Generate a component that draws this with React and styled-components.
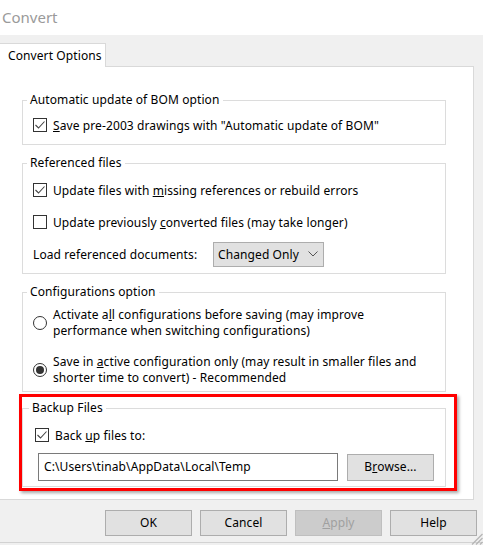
import React from 'react';
import styled, { createGlobalStyle } from 'styled-components';

const Global = createGlobalStyle`
  html, body { margin: 0; padding: 0; background: #f0f0f0; }
  body {
    font-family: "Noto Sans", "Open Sans", sans-serif;
    font-size: 12px;
    letter-spacing: 0.1px;
    color: #000;
    overflow: hidden;
  }
  * { box-sizing: border-box; }
`;

const Window = styled.div`
  position: relative;
  width: 483px;
  height: 545px;
  display: flex;
  flex-direction: column;
  background: #f0f0f0;
  overflow: hidden;
`;

const TitleBar = styled.div`
  height: 35px;
  flex: none;
  background: #fff;
  display: flex;
  align-items: center;
  padding-left: 2px;
  padding-bottom: 1px;
  font-size: 15px;
  letter-spacing: 0;
  color: #9a9a9a;
`;

const Body = styled.div`
  display: flex;
  flex-direction: column;
  padding-top: 8px;
`;

const TabStrip = styled.div`
  display: flex;
  height: 24px;
  margin-bottom: -1px;
  position: relative;
  z-index: 1;
`;

const Tab = styled.div`
  width: 106px;
  height: 24px;
  background: #fff;
  border-top: 1px solid #d9d9d9;
  border-right: 1px solid #d9d9d9;
  display: flex;
  align-items: center;
  padding-left: 8px;
  padding-bottom: 1px;
`;

const Panel = styled.div`
  width: 474px;
  background: #fff;
  border-top: 1px solid #d9d9d9;
  border-right: 1px solid #d9d9d9;
  border-bottom: 1px solid #d9d9d9;
  padding: 25px 27px 8px 22px;
  display: flex;
  flex-direction: column;
  gap: 10px;
`;

const Group = styled.fieldset`
  margin: 0;
  min-width: 0;
  border: 1px solid #dcdcdc;
  padding: ${(p) => p.$pt}px ${(p) => p.$pr ?? 10}px ${(p) => p.$pb}px ${(p) => p.$pl ?? 10}px;
  display: flex;
  flex-direction: column;
  gap: ${(p) => p.$gap ?? 0}px;
`;

const Legend = styled.legend`
  padding: 0 3px;
  margin-left: -6px;
  line-height: 16px;
  height: 16px;
`;

const Row = styled.div`
  display: flex;
  align-items: center;
  height: ${(p) => p.$h ?? 24}px;
  gap: ${(p) => p.$gap ?? 6}px;
`;

const Box = styled.span`
  width: 14px;
  height: 14px;
  flex: none;
  border: 1px solid #333;
  background: #fff;
  display: flex;
  align-items: center;
  justify-content: center;
`;

const RadioCircle = styled.span`
  width: 14px;
  height: 14px;
  flex: none;
  border-radius: 50%;
  border: 1px solid #333;
  background: #fff;
  display: flex;
  align-items: center;
  justify-content: center;
  &::after {
    content: "";
    width: 8px;
    height: 8px;
    border-radius: 50%;
    background: #333;
    display: ${(p) => (p.$on ? 'block' : 'none')};
  }
`;

const RadioRow = styled.div`
  display: flex;
  align-items: center;
  gap: 6px;
  line-height: 16px;
`;

const Label = styled.span`
  white-space: nowrap;
`;

const FieldLabel = styled.span`
  width: 180px;
  flex: none;
  white-space: nowrap;
`;

const Select = styled.div`
  width: 111px;
  height: 25px;
  border: 1px solid #adadad;
  background: #e1e1e1;
  display: flex;
  align-items: center;
  justify-content: space-between;
  padding: 0 5px 1px 4px;
`;

const Highlight = styled.div`
  border: 3px solid #f00;
  box-shadow: 2px 2px 3px rgba(0, 0, 0, 0.35);
  margin: -8px -11px 0 -3px;
  padding: 3px 8px 1px 0;
`;

const PathInput = styled.div`
  flex: 1;
  height: 28px;
  margin-left: 3px;
  border: 1px solid #7a7a7a;
  background: #fff;
  display: flex;
  align-items: center;
  padding: 0 0 1px 5px;
`;

const Button = styled.div`
  width: 87px;
  height: ${(p) => p.$h ?? 26}px;
  flex: none;
  border: 1px solid ${(p) => (p.$disabled ? '#bfbfbf' : '#adadad')};
  background: ${(p) => (p.$disabled ? '#cccccc' : '#e1e1e1')};
  color: ${(p) => (p.$disabled ? '#a0a0a0' : '#000')};
  display: flex;
  align-items: center;
  justify-content: center;
  padding-bottom: 1px;
`;

const ButtonRow = styled.div`
  display: flex;
  justify-content: flex-end;
  gap: 8px;
  padding: 10px 6px 0 0;
`;

const BottomLine = styled.div`
  margin-top: 6px;
  height: 1px;
  background: #d2d2d2;
`;

const Grip = styled.svg`
  position: absolute;
  right: 0;
  bottom: 0;
`;

const Check = () => (
  <svg width="12" height="12" viewBox="0 0 12 12">
    <polyline points="1.5,6 4.5,9 10.5,2.5" fill="none" stroke="#444" strokeWidth="1.1" />
  </svg>
);

const Checkbox = ({ checked }) => <Box>{checked && <Check />}</Box>;

export default function App() {
  return (
    <>
      <Global />
      <Window>
        <TitleBar>Convert</TitleBar>
        <Body>
          <TabStrip>
            <Tab>Convert Options</Tab>
          </TabStrip>
          <Panel>
            <Group $pt={5} $pb={7}>
              <Legend>Automatic update of BOM option</Legend>
              <Row>
                <Checkbox checked />
                <Label>
                  <u>S</u>ave pre-2003 drawings with "Automatic update of BOM"
                </Label>
              </Row>
            </Group>

            <Group $pt={7} $pb={6} $gap={8}>
              <Legend>Referenced files</Legend>
              <Row>
                <Checkbox checked />
                <Label>
                  Update files with <u>m</u>issing references or rebuild errors
                </Label>
              </Row>
              <Row>
                <Checkbox />
                <Label>
                  Update previously <u>c</u>onverted files (may take longer)
                </Label>
              </Row>
              <Row $h={25} $gap={0}>
                <FieldLabel>Load referenced documents:</FieldLabel>
                <Select>
                  <span>Changed Only</span>
                  <svg width="10" height="6" viewBox="0 0 10 6">
                    <polyline points="0.5,0.5 5,5 9.5,0.5" fill="none" stroke="#555" strokeWidth="1" />
                  </svg>
                </Select>
              </Row>
            </Group>

            <Group $pt={7} $pb={5} $gap={15}>
              <Legend>Configurations option</Legend>
              <RadioRow>
                <RadioCircle />
                <Label>
                  Activate a<u>l</u>l configurations before saving (may improve
                  <br />
                  performance when switching configurations)
                </Label>
              </RadioRow>
              <RadioRow>
                <RadioCircle $on />
                <Label>
                  Save in <u>a</u>ctive configuration only (may result in smaller files and
                  <br />
                  shorter time to convert) - Recommended
                </Label>
              </RadioRow>
            </Group>

            <Highlight>
              <Group $pt={7} $pb={5} $pl={12} $pr={11} $gap={6}>
                <Legend>Backup Files</Legend>
                <Row>
                  <Checkbox checked />
                  <Label>
                    Back <u>u</u>p files to:
                  </Label>
                </Row>
                <Row $h={28} $gap={9}>
                  <PathInput>C:\Users\tinab\AppData\Local\Temp</PathInput>
                  <Button $h={27}>
                    B<u>r</u>owse...
                  </Button>
                </Row>
              </Group>
            </Highlight>
          </Panel>

          <ButtonRow>
            <Button>OK</Button>
            <Button>Cancel</Button>
            <Button $disabled>
              <u>A</u>pply
            </Button>
            <Button>Help</Button>
          </ButtonRow>
          <BottomLine />
        </Body>
        <Grip width="14" height="14" viewBox="0 0 14 14">
          <g stroke="#b5b5b5" strokeWidth="1.2">
            <line x1="13.5" y1="3" x2="3" y2="13.5" />
            <line x1="13.5" y1="7" x2="7" y2="13.5" />
            <line x1="13.5" y1="11" x2="11" y2="13.5" />
          </g>
        </Grip>
      </Window>
    </>
  );
}
